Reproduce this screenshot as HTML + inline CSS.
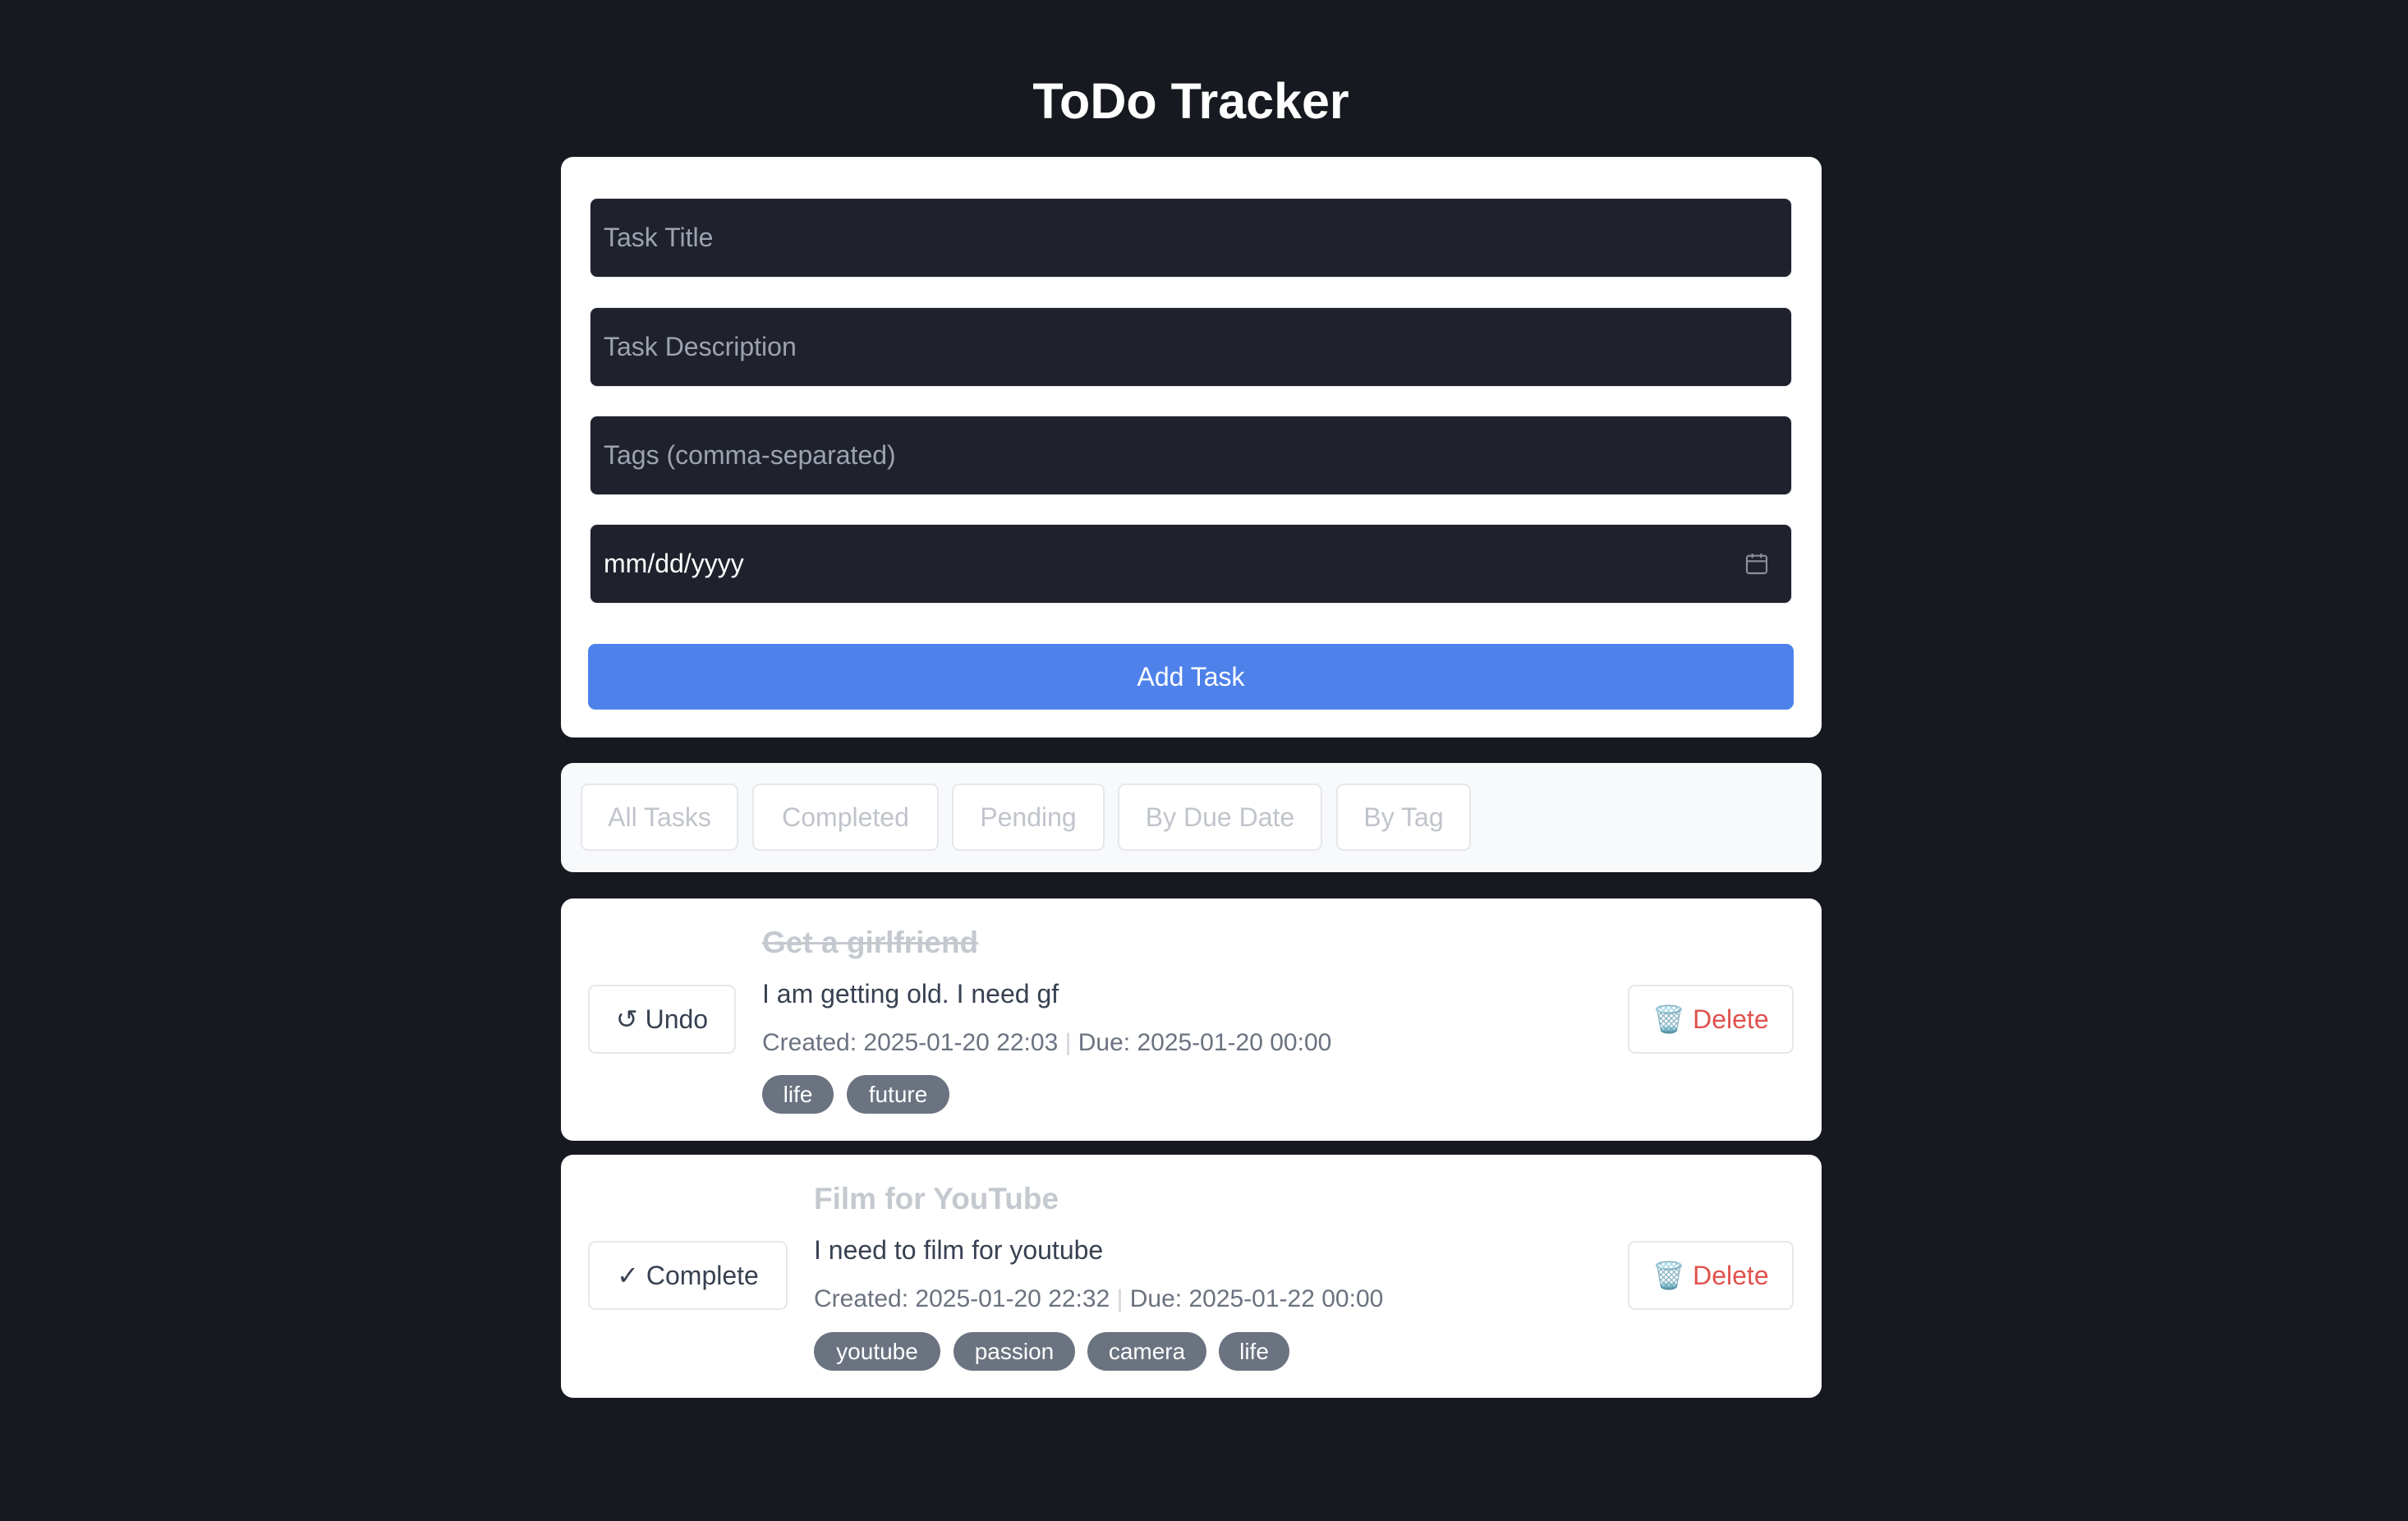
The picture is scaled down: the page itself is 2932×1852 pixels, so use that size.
<!DOCTYPE html>
<html><head><meta charset="utf-8"><style>
*{box-sizing:border-box;margin:0;padding:0}
body{width:2932px;height:1852px;background:#161920;font-family:"Liberation Sans",Arial,sans-serif;position:relative;overflow:hidden}
.a{position:absolute}
h1{position:absolute;left:-16px;width:2932px;top:83px;text-align:center;color:#fff;font-size:61px;font-weight:bold;line-height:80px}
.card{position:absolute;left:683px;width:1535px;background:#fff;border-radius:15px}
.inp{position:absolute;left:718px;width:1464px;height:97px;background:#1f222d;border-radius:9px;border:1px solid #e5e7eb;color:#9ca3af;font-size:32px;line-height:95px;padding-left:16px}
.btn{position:absolute;background:#fff;border:2px solid #e5e7eb;border-radius:9px;font-size:32px;text-align:center}
.fb{top:954px;height:82px;line-height:78px;color:#c0c4cb}
.tb{height:84px;line-height:80px;color:#374151}
.tt{position:absolute;font-size:37px;font-weight:bold;color:#c4c8cf;line-height:44px}
.ds{position:absolute;font-size:32px;color:#374151;line-height:40px}
.mt{position:absolute;font-size:30px;color:#6b7280;line-height:36px}
.mt span{color:#d1d5db}
.tag{position:absolute;height:47px;line-height:47px;background:#6b7280;color:#fff;font-size:28px;border-radius:24px;text-align:center}
.del{color:#e0524d}
</style></head><body>
<h1>ToDo Tracker</h1>
<div class="card" style="top:191px;height:707px"></div>
<div class="inp" style="top:241px">Task Title</div>
<div class="inp" style="top:374px">Task Description</div>
<div class="inp" style="top:506px">Tags (comma-separated)</div>
<div class="inp" style="top:638px;color:#fff">mm/dd/yyyy
<svg class="a" style="left:1404px;top:31px" width="32" height="32" viewBox="0 0 24 24" fill="none" stroke="#8b909a" stroke-width="1.6"><rect x="3" y="5" width="18" height="16" rx="2"/><path d="M3 10h18M8 3v4M16 3v4"/></svg></div>
<div class="a" style="left:716px;top:784px;width:1468px;height:80px;background:#4e82ea;border-radius:9px;color:#fff;font-size:32px;line-height:80px;text-align:center">Add Task</div>

<div class="card" style="top:929px;height:133px;background:#f8f9fb"></div>
<div class="btn fb" style="left:707px;width:192px">All Tasks</div>
<div class="btn fb" style="left:916px;width:227px">Completed</div>
<div class="btn fb" style="left:1159px;width:186px">Pending</div>
<div class="btn fb" style="left:1361px;width:249px">By Due Date</div>
<div class="btn fb" style="left:1627px;width:164px">By Tag</div>

<div class="card" style="top:1094px;height:295px"></div>
<div class="btn tb" style="left:716px;top:1199px;width:180px">↺ Undo</div>
<div class="tt" style="left:928px;top:1126px;text-decoration:line-through">Get a girlfriend</div>
<div class="ds" style="left:928px;top:1190px">I am getting old. I need gf</div>
<div class="mt" style="left:928px;top:1252px">Created: 2025-01-20 22:03 <span>|</span> Due: 2025-01-20 00:00</div>
<div class="tag" style="left:928px;top:1309px;width:87px">life</div>
<div class="tag" style="left:1031px;top:1309px;width:125px">future</div>
<div class="btn tb del" style="left:1982px;top:1199px;width:202px">🗑️ Delete</div>

<div class="card" style="top:1406px;height:296px"></div>
<div class="btn tb" style="left:716px;top:1511px;width:243px">✓ Complete</div>
<div class="tt" style="left:991px;top:1438px">Film for YouTube</div>
<div class="ds" style="left:991px;top:1502px">I need to film for youtube</div>
<div class="mt" style="left:991px;top:1564px">Created: 2025-01-20 22:32 <span>|</span> Due: 2025-01-22 00:00</div>
<div class="tag" style="left:991px;top:1622px;width:154px">youtube</div>
<div class="tag" style="left:1161px;top:1622px;width:148px">passion</div>
<div class="tag" style="left:1324px;top:1622px;width:145px">camera</div>
<div class="tag" style="left:1484px;top:1622px;width:86px">life</div>
<div class="btn tb del" style="left:1982px;top:1511px;width:202px">🗑️ Delete</div>
</body></html>
